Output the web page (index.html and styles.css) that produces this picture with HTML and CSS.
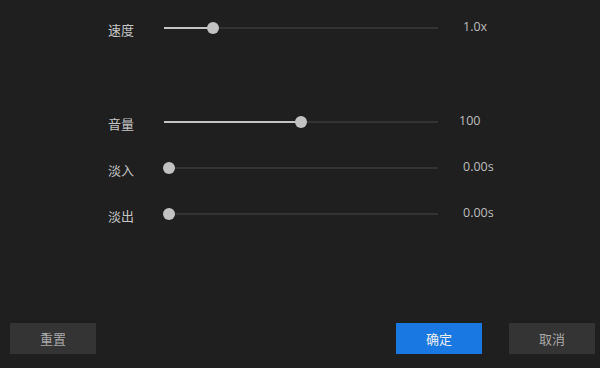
FILE: index.html
```html
<!DOCTYPE html>
<html>

<head>
   <title>Audio Settings</title>
   <link rel="stylesheet" href="styles.css">
</head>

<body>
   <div class="panel">
      <div class="settings">
         <div class="row">
            <div class="label">速度</div>
            <div class="track">
               <div class="fill" style="width: 49px;"></div>
               <div class="thumb" style="left: 49px;"></div>
            </div>
            <div class="value">1.0x</div>
         </div>

         <div class="spacer"></div>

         <div class="row">
            <div class="label">音量</div>
            <div class="track">
               <div class="fill" style="width: 137px;"></div>
               <div class="thumb" style="left: 137px;"></div>
            </div>
            <div class="value value-num">100</div>
         </div>
         <div class="row">
            <div class="label">淡入</div>
            <div class="track">
               <div class="thumb" style="left: 5px;"></div>
            </div>
            <div class="value">0.00s</div>
         </div>
         <div class="row">
            <div class="label">淡出</div>
            <div class="track">
               <div class="thumb" style="left: 5px;"></div>
            </div>
            <div class="value">0.00s</div>
         </div>
      </div>

      <div class="footer">
         <button class="btn">重置</button>
         <div class="footer-right">
            <button class="btn btn-primary">确定</button>
            <button class="btn">取消</button>
         </div>
      </div>
   </div>
</body>

</html>
```

FILE: styles.css
```css
body {
   margin: 0;
   background-color: #1f1f1f;
   color: #c8c8c8;
   font-family: "Noto Sans CJK SC", "Noto Sans", sans-serif;
   font-size: 13px;
}

.panel {
   height: 368px;
   display: flex;
   flex-direction: column;
   justify-content: space-between;
   box-sizing: border-box;
   padding: 5px 5px 14px 10px;
}

.settings {
   display: flex;
   flex-direction: column;
   padding-left: 98px;
}

.row {
   display: flex;
   align-items: center;
   height: 46px;
}

.spacer {
   height: 48px;
}

.label {
   width: 56px;
   color: #c6c6c6;
   line-height: 1;
   padding-top: 3px;
}

.track {
   position: relative;
   width: 274px;
   height: 2px;
   background-color: #333;
}

.fill {
   height: 2px;
   background-color: #c4c4c4;
}

.thumb {
   position: absolute;
   top: -5px;
   width: 12px;
   height: 12px;
   margin-left: -6px;
   border-radius: 50%;
   background-color: #c2c2c2;
}

.value {
   margin-left: 25px;
   font-family: "Open Sans", "Noto Sans", sans-serif;
   font-size: 12.5px;
   color: #bdbdbd;
   margin-top: -3px;
}

.value-num {
   margin-left: 21px;
}

.footer {
   display: flex;
   justify-content: space-between;
   align-items: center;
}

.footer-right {
   display: flex;
   gap: 27px;
}

.btn {
   width: 86px;
   height: 31px;
   border: none;
   border-radius: 0;
   background-color: #343434;
   color: #a8a8a8;
   font-family: "Noto Sans CJK SC", sans-serif;
   font-size: 13px;
   cursor: pointer;
}

.btn-primary {
   background-color: #1a78e2;
   color: #f0f0f0;
}
```
